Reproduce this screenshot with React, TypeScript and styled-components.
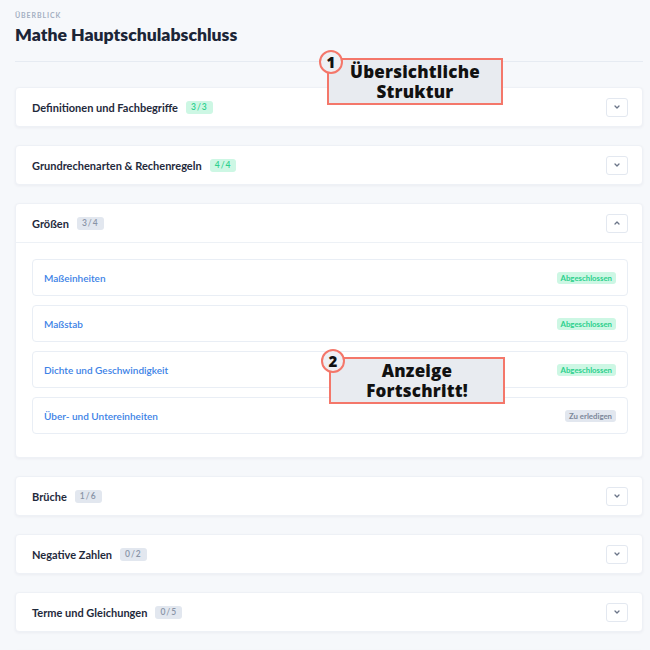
import React from "react";
import styled, { createGlobalStyle } from "styled-components";

const Global = createGlobalStyle`
  html, body { margin: 0; padding: 0; background: #f6f8fb; }
  body { font-family: "Lato", "Noto Sans", sans-serif; }
  * { box-sizing: border-box; }
`;

const Page = styled.div`
  position: relative;
  width: 650px;
  height: 650px;
  overflow: hidden;
  padding: 10px 7px 0 15px;
  background: #f6f8fb;
`;

const Eyebrow = styled.div`
  font-size: 7px;
  font-weight: 700;
  letter-spacing: 0.9px;
  color: #a3afc2;
  text-transform: uppercase;
  line-height: 10px;
`;

const Title = styled.h1`
  margin: 3px 0 0;
  font-size: 17.6px;
  font-weight: 800;
  color: #1b2537;
  line-height: 24px;
`;

const Divider = styled.div`
  height: 1px;
  background: #e6ebf2;
  margin: 14px 0 25px;
`;

const List = styled.div`
  display: flex;
  flex-direction: column;
  gap: 18px;
`;

const Card = styled.div`
  background: #fff;
  border: 1px solid #eef1f6;
  border-radius: 4px;
  box-shadow: 0 1px 3px rgba(30, 45, 80, 0.05);
`;

const Header = styled.div<{ $open?: boolean }>`
  display: flex;
  align-items: center;
  height: ${(p) => (p.$open ? "39px" : "38px")};
  padding: 0 14px 0 16px;
  border-bottom: ${(p) => (p.$open ? "1px solid #edf1f6" : "none")};
`;

const CardTitle = styled.span`
  font-size: 11px;
  font-weight: 700;
  color: #1f2a3c;
`;

const Count = styled.span<{ $done: boolean }>`
  margin-left: 8px;
  padding: 0 5px;
  height: 13px;
  line-height: 13px;
  border-radius: 3px;
  font-size: 8.5px;
  font-weight: 600;
  letter-spacing: 1px;
  background: ${(p) => (p.$done ? "#cdf7e4" : "#e2e7ef")};
  color: ${(p) => (p.$done ? "#2bd08c" : "#8893a6")};
`;

const Toggle = styled.button`
  margin-left: auto;
  width: 22px;
  height: 19px;
  padding: 0;
  border: 1px solid #e3e8f0;
  border-radius: 3px;
  background: #fff;
  display: flex;
  align-items: center;
  justify-content: center;
  color: #6b7588;
`;

const Body = styled.div`
  display: flex;
  flex-direction: column;
  gap: 9px;
  padding: 16px 14px 23px 16px;
`;

const Item = styled.div`
  display: flex;
  align-items: center;
  height: 37px;
  padding: 0 11px 0 11px;
  border: 1px solid #e9eef5;
  border-radius: 4px;
  background: #fff;
`;

const ItemLink = styled.span`
  font-size: 10px;
  font-weight: 600;
  color: #3c82e6;
`;

const Status = styled.span<{ $done: boolean }>`
  margin-left: auto;
  padding: 0 4px;
  height: 12px;
  line-height: 12px;
  border-radius: 3px;
  font-size: 7.8px;
  font-weight: 700;
  background: ${(p) => (p.$done ? "#cdf7e4" : "#e2e7ef")};
  color: ${(p) => (p.$done ? "#2bd08c" : "#7c879a")};
`;

const Callout = styled.div<{ $x: number; $y: number }>`
  position: absolute;
  left: ${(p) => p.$x}px;
  top: ${(p) => p.$y}px;
  width: 176px;
  height: 47px;
  padding-top: 1px;
  background: #e8ebf0;
  border: 2px solid #f4776a;
  display: flex;
  align-items: center;
  justify-content: center;
  text-align: center;
  font-family: "Open Sans", "Noto Sans", sans-serif;
  font-weight: 800;
  font-size: 17px;
  line-height: 20px;
  letter-spacing: 0.2px;
  color: #111;
`;

const Marker = styled.div`
  position: absolute;
  left: -10px;
  top: -10px;
  width: 24px;
  height: 24px;
  border-radius: 50%;
  border: 2px solid #f4776a;
  background: #eef0f4;
  display: flex;
  align-items: center;
  justify-content: center;
  font-family: "Open Sans", "Noto Sans", sans-serif;
  font-weight: 800;
  font-size: 15px;
  line-height: 1;
  color: #111;
`;

const Chevron = ({ up }: { up?: boolean }) => (
  <svg width="8" height="6" viewBox="0 0 8 6" fill="none">
    <path
      d={up ? "M2 4 L4 2 L6 4" : "M2 2 L4 4 L6 2"}
      stroke="currentColor"
      strokeWidth="1.3"
      strokeLinecap="round"
      strokeLinejoin="round"
    />
  </svg>
);

type Topic = { title: string; done: number; total: number; open?: boolean };

const topics: Topic[] = [
  { title: "Definitionen und Fachbegriffe", done: 3, total: 3 },
  { title: "Grundrechenarten & Rechenregeln", done: 4, total: 4 },
  { title: "Größen", done: 3, total: 4, open: true },
  { title: "Brüche", done: 1, total: 6 },
  { title: "Negative Zahlen", done: 0, total: 2 },
  { title: "Terme und Gleichungen", done: 0, total: 5 },
  { title: "Geometrie", done: 0, total: 4 },
];

const lessons = [
  { name: "Maßeinheiten", done: true },
  { name: "Maßstab", done: true },
  { name: "Dichte und Geschwindigkeit", done: true },
  { name: "Über- und Untereinheiten", done: false },
];

export default function App() {
  return (
    <>
      <Global />
      <Page>
        <Eyebrow>Überblick</Eyebrow>
        <Title>Mathe Hauptschulabschluss</Title>
        <Divider />
        <List>
          {topics.map((t) => (
            <Card key={t.title}>
              <Header $open={t.open}>
                <CardTitle>{t.title}</CardTitle>
                <Count $done={t.done === t.total}>
                  {t.done}/{t.total}
                </Count>
                <Toggle>
                  <Chevron up={t.open} />
                </Toggle>
              </Header>
              {t.open && (
                <Body>
                  {lessons.map((l) => (
                    <Item key={l.name}>
                      <ItemLink>{l.name}</ItemLink>
                      <Status $done={l.done}>
                        {l.done ? "Abgeschlossen" : "Zu erledigen"}
                      </Status>
                    </Item>
                  ))}
                </Body>
              )}
            </Card>
          ))}
        </List>
        <Callout $x={327} $y={58}>
          <Marker>1</Marker>
          Übersichtliche
          <br />
          Struktur
        </Callout>
        <Callout $x={329} $y={357}>
          <Marker>2</Marker>
          Anzeige
          <br />
          Fortschritt!
        </Callout>
      </Page>
    </>
  );
}
